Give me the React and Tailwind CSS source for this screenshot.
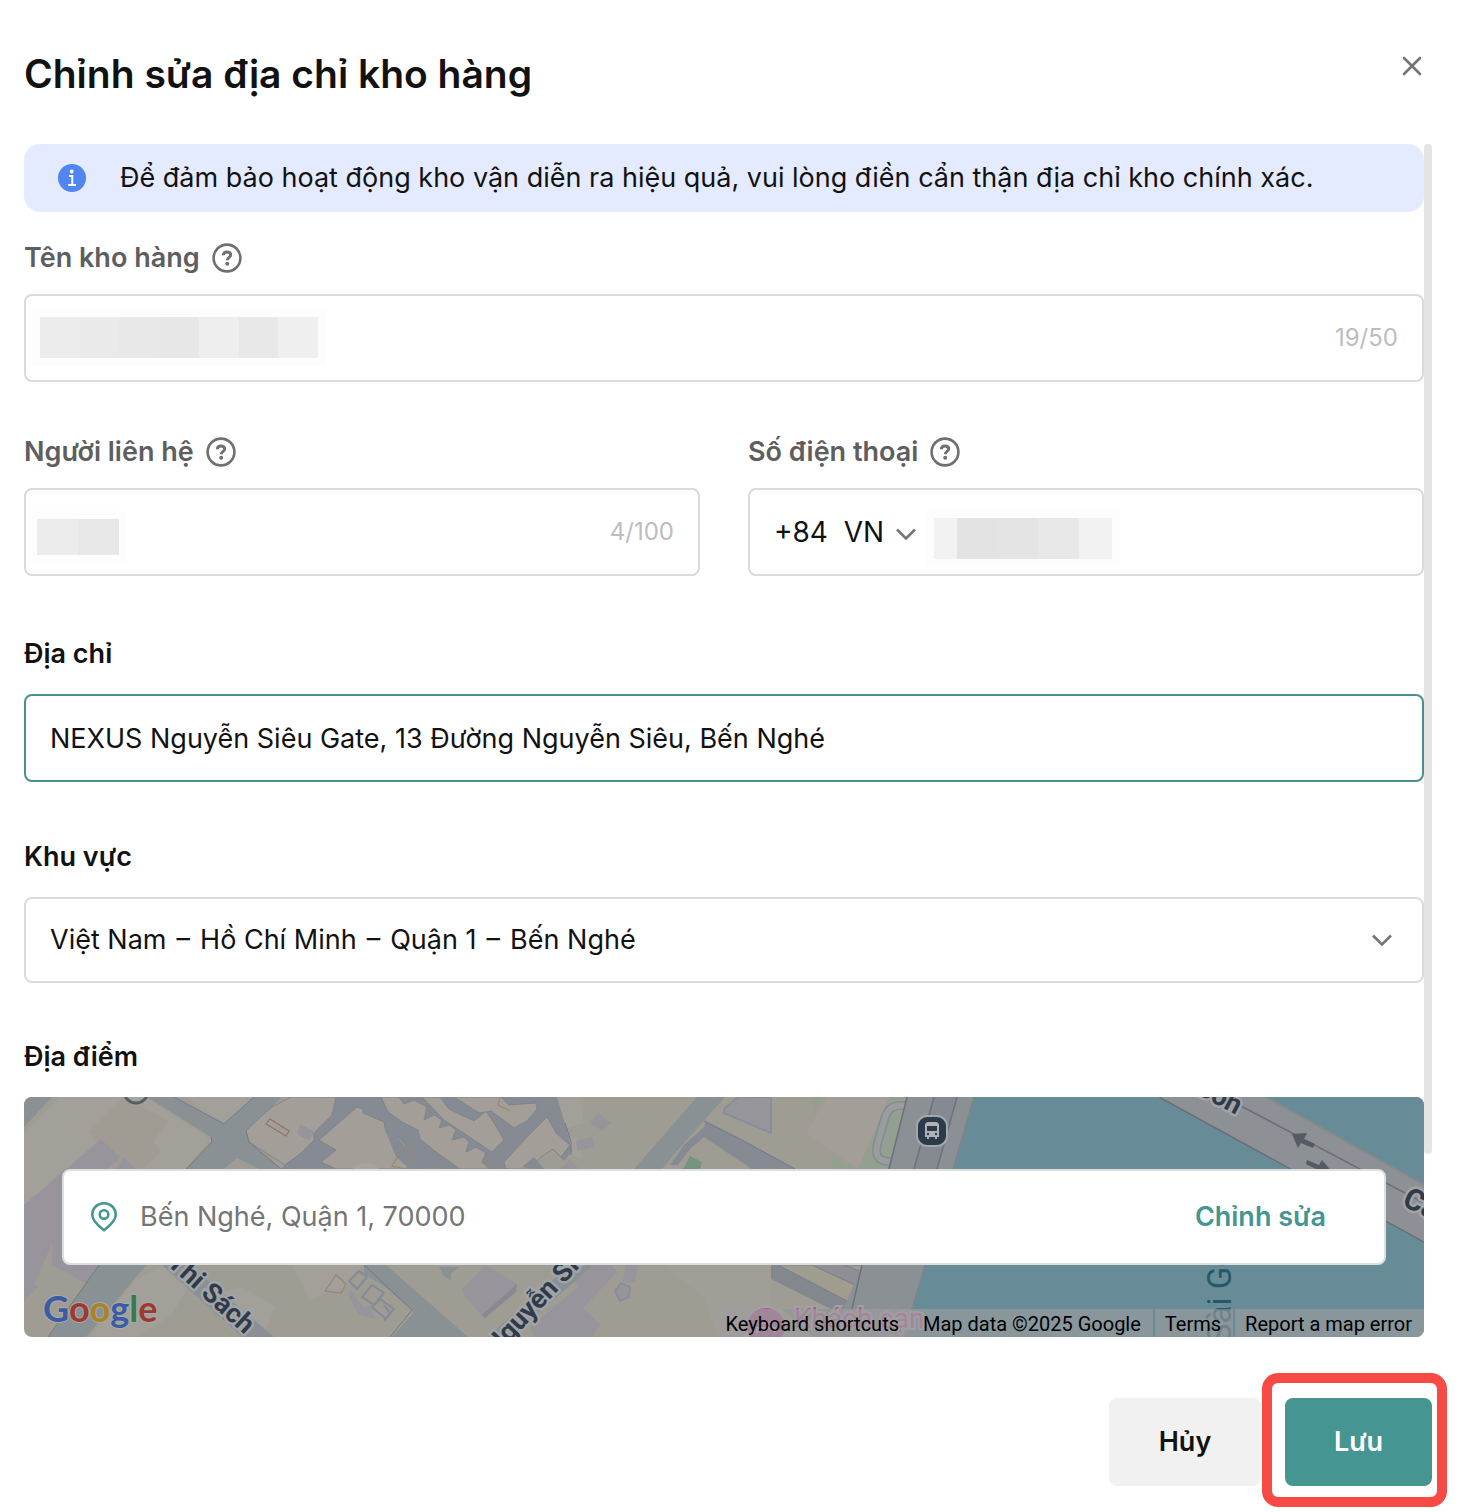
import { useState } from 'react';

const NAME_BLOCKS = ['bg-[#ececec]', 'bg-[#eaeaea]', 'bg-[#e8e8e8]', 'bg-[#e7e7e7]', 'bg-[#eeeeee]', 'bg-[#e8e8e8]', 'bg-[#efefef]'];
const CONTACT_BLOCKS = ['bg-[#ececec]', 'bg-[#e8e8e8]'];
const PHONE_BLOCKS = ['bg-[#e3e3e3]', 'bg-[#e4e4e4]', 'bg-[#e8e8e8]'];

/** Row of grey blocks that hides a private value. */
const Mosaic = ({ blocks, className }) => (
    <div className={`pointer-events-none absolute flex outline-8 outline-[#fdfdfd] ${className}`} aria-hidden="true">
        {blocks.map((color, i) => <span key={i} className={`flex-1 ${color}`} />)}
    </div>
);

const HelpIcon = () => (
    <svg className="size-[30px] text-[#707070]" viewBox="0 0 30 30" fill="none" stroke="currentColor" strokeWidth="2.6">
        <circle cx="15" cy="15" r="13.4" />
        <path d="M11.300 12.300c.1-2.200 1.600-3.300 3.700-3.300s3.700 1.200 3.700 3c0 2.400-3.400 2.500-3.400 5.200" strokeWidth="3" />
        <circle cx="15.200" cy="20.800" r="2" fill="currentColor" stroke="none" />
    </svg>
);

const Chevron = ({ className }) => (
    <svg className={`pointer-events-none absolute h-3 w-5 text-[#757575] ${className}`} viewBox="0 0 20 12" fill="none" stroke="currentColor" strokeWidth="2.6">
        <path d="M1 1.500l9 9 9-9" />
    </svg>
);

const FieldLabel = ({ htmlFor, children }) => (
    <div className="mb-4 flex h-10 items-center gap-3">
        <label htmlFor={htmlFor} className="font-semibold text-[#5e5e5e]">{children}</label>
        <HelpIcon />
    </div>
);

/** Map of the river bank, already dimmed behind the address card. */
const MapDrawing = () => (
    <svg className="absolute inset-0 h-full w-full" viewBox="0 0 1400 240" preserveAspectRatio="xMidYMid slice" aria-hidden="true">
        <rect width="1400" height="240" fill="#9f9c94" />

        {/* city blocks */}
        <g fill="#a3a09a">
            <path d="M60 0h62l64 42-24 30H40L0 110V36L36 0z" />
            <path d="M160 0h70l-30 25z" />
            <path d="M530 0h26l4 26-20 6z M545 38l14 8-2 16-16-6z" />
            <path d="M803 0h62l-30 72-53-36z" fill="#a39f98" />
            <path d="M640 168h120v72h-66l-14-40z" fill="#a19e98" />
            <path d="M110 184l30-16 28 14-20 36-34 22H66z M178 200l40-10 34 20-12 26h-30z M268 168h70l-12 20-40 14z" />
        </g>
        <path d="M100 0l44 24-14 20 6 12-18 16H88L66 34z" fill="#9e9a92" opacity=".7" />

        {/* purple buildings */}
        <g fill="#97959b">
            <path d="M77 42l19 18-12 12h8l8-12 12 12v96H82l-14 22-14-8-26-14v-22L14 180l-14 24V108L54 62z" />
            <path d="M0 156l16 12-6 10-10-8z M0 178l14 12-14 14z" />
            <path d="M566 26l8-10 13 10-9 8z M552 44l17-4 2 10-18 4z M496 62l10 10h-16z M545 62l10 10h-18z" />
            <path d="M438 192l24-24 31 19-1 8-32 26-19-21z" />
            <path d="M540 168h48l5 7-34 36 17 16-8 13h-58l-4-10 48-40z" />
            <path d="M602 168h12l-3 18-12-1z" />
            <path d="M326 192l14 20 5-4 6 14-16-4-10-18z" />
        </g>
        <path d="M458 218l3 3 31-26 1-8z" fill="#8a8890" />

        {/* streets */}
        <g fill="#8a9195">
            <path d="M0 0h28L0 30z" />
            <path d="M123 0h27l50 27 30-27h27l-9 10-26 24 3 11 32 27h-22l-22-11-13 11h-38l26-27-1-5z" />
            <path d="M75 168h47l-60 72H24z" />
            <path d="M138 168h28l84 72h-32z" />
            <path d="M340 168h22l82 72h-76l22-25-30-26-20-12z" />
            <path d="M673 0h28l-49 55-14 17h-28z" />
            <path d="M512 196l36-28h22l-84 72h-22z" />
            <path d="M415 170h20l-8 6v8l-8-6z" />
        </g>

        {/* narrow lanes, with the blocks between them laid on top */}
        <path d="M257 72l51-56 4-16h221l12 40 3 14-8 10-12-12-10 2-12 18z" fill="#858a93" />
        <g fill="#a39f98" stroke="#7b8088" strokeWidth=".8">
            <path d="M233 23l15-13 19-10h45l-4 18-18 18v7l-13 13-16 12-36-23-3-11z" />
            <path d="M333 10l6 2v4l21 9 2 10 14 6 6 8 8 23h-78l-15-7 15-12-17-10z" />
            <path d="M357 0h18l5 7 10-4 13 7-3 13 10-5 8 5-3 8 10-3 7 5-4 10 12-3 5 5-3 10 10-5 10 6-4 9 8 7h-30l-20-14-20-16-2-9-16-8-14-10z" />
            <path d="M398 0h18l9 12 25 12 12-10 8 12 10 17-12 12-48-32z" />
            <path d="M430 0h47l8 8 27-2 1 6-10 12-13 7-23-17-12 2z" />
            <path d="M523 20l6 10 3 6 14 12-9 12-8-8-12 8-10 12h-25l-2-7 23-25z" />
        </g>
        <path d="M276 27l15 8-6 9-12-7z" fill="#97959b" />
        <path d="M360 30l14 10 10 14 14 10 8 8h-20l-14-12z" fill="#858a93" />
        <g fill="#858a93">
            <path d="M682 24l38 20 52 28h-44l-48-32-14 12-12 16h-8l14-20 20-18z" />
            <path d="M510 60l10 12h-14l-8-2z" />
        </g>
        <g fill="none" stroke="#747b85" strokeWidth="1">
            <path d="M150 0l50 27 30-27 M222 34l3 11 32 27 M162 72l26-27-1-5 M541 26l6 18v14" />
            <path d="M680 24l40 20 51 28 M340 168l48 45-22 27 M24 240l51-72" />
        </g>

        {/* outlined lots */}
        <g fill="none" stroke="#8d7468" strokeWidth="1.200">
            <path d="M242 27l4-5 19 12-3 5z" />
            <path d="M368 69l12-19 12 6-10 16z M476 0l-2 8 12 6 M462 72l4-8 8 4-2 4" stroke="#938b74" />
            <path d="M301 194l11-16 10 9-5 9z" stroke="#938770" />
            <path d="M325 184l10-10 8 6-10 12z M338 200l10-12 12 8-10 12z M348 210l8-8 14 10-8 10z M360 208l6 8-6 8" stroke="#858a98" strokeWidth="2" />
            <path d="M597 186l9 4-1 10-9 4-5-10z M700 12l14-12h33v36L700 16z" stroke="#898d99" strokeWidth="2" fill="#96969a" />
        </g>

        {/* parks */}
        <path d="M666 59l12 6-2 7h-17z" fill="#76957e" />
        <path d="M788 0h10l-6 14z M806 60l28 12 31-72h18l-18 72h-55z" fill="#93a090" />
        <path d="M885 9c-16-2-21 2-24 12l-7 24c-4 14 0 19 13 20" fill="none" stroke="#848b94" strokeWidth="9" />
        <path d="M885 9c-16-2-21 2-24 12l-7 24c-4 14 0 19 13 20" fill="none" stroke="#9a9d9d" strokeWidth="6" />

        {/* stepped blocks beside the quay */}
        <path d="M747 168h95l-14 72h-40l-41-38z" fill="#8d8f94" />
        <path d="M747 168h8l74 38-4 12 12 22h-22l-68-45z" fill="#83888f" />
        <path d="M754 168h34l43 20-4 18z M820 168h18l-2 6z" fill="#a09c90" stroke="#7a7f87" strokeWidth="1" />
        <path d="M747 182l60 30h-60z" fill="#9f9c94" />

        {/* river and quay road */}
        <path d="M950 0h450v240H880z" fill="#688c97" />
        <path d="M883 0h67l-70 240h-72l30-72z" fill="#8b9094" />
        <path d="M910 0h23l-20 72h-23z" fill="#858992" />
        <path d="M910 0l-20 72 M933 0l-20 72 M883 0l-18 72 M838 168l-10 44" fill="none" stroke="#6d717d" strokeWidth="1.500" />
        <path d="M950 0l-70 240" stroke="#7c8588" strokeWidth="1.500" />

        {/* bridge */}
        <path d="M1135 0h107l158 88v57z" fill="#8d9094" />
        <path d="M1242 0l158 88" stroke="#858a8a" strokeWidth="2" />
        <path d="M1135 0l265 145 M1217 9l183 97" stroke="#6b6d77" strokeWidth="1.500" />
        <g fill="#555a64">
            <path d="M1268 37l15-1-3 6 11 5-2 4-12-5-3 5z" />
            <path d="M1283 63l12 5 3-5 12 14-16 3 2-6-14-7z" />
        </g>

        {/* place markers */}
        <circle cx="112" cy="-6" r="12" fill="#a5a5a3" stroke="#575e65" strokeWidth="3" />
        <circle cx="342" cy="84" r="18" fill="#a6a49f" />
        <rect x="893" y="19" width="30" height="30" rx="10" fill="#2d3a4a" stroke="#a3a8ab" strokeWidth="2" />
        <path d="M901 28q0-3 4-3h6q4 0 4 3v12h-2v2h-2v-2h-6v2h-2v-2h-2z" fill="#aeb3b8" />
        <path d="M903 29h10v5h-10z" fill="#2d3a4a" />
        <circle cx="904" cy="37" r="1.200" fill="#2d3a4a" />
        <circle cx="912" cy="37" r="1.200" fill="#2d3a4a" />
        <circle cx="742" cy="230" r="20" fill="#a2608f" stroke="#a5a19f" strokeWidth="2" />
        <path d="M733 236v-5h18v5 M736 231v-5h12v5" fill="none" stroke="#b9a1b3" strokeWidth="2" />

        {/* names on the map */}
        <g fontFamily="Roboto, sans-serif" fontWeight="700" fontSize="27" fill="#303a48" stroke="#a0a4a7" strokeWidth="5" paintOrder="stroke" strokeLinejoin="round">
            <text transform="translate(142 167) rotate(42)">Thi Sách</text>
            <text transform="translate(472 260) rotate(-47)">Nguyễn Siêu</text>
            <text transform="translate(1169 -5) rotate(28)">Gòn</text>
            <text transform="translate(1377 108) rotate(26)" fontSize="30">Cầu</text>
        </g>
        <text transform="translate(1207 246) rotate(-90)" fontFamily="Roboto, sans-serif" fontSize="33" fill="#245866">Sài Gòn</text>
        <text x="770" y="231" fontFamily="Roboto, sans-serif" fontSize="28" fill="#a2608f" stroke="#a39fa2" strokeWidth="4" paintOrder="stroke">Khách sạn</text>
        <text x="19" y="225" fontFamily="Lato, sans-serif" fontWeight="700" fontSize="36" stroke="#a8a9a9" strokeWidth="2" paintOrder="stroke">
            <tspan fill="#3b5ba5">G</tspan>
            <tspan fill="#9c3a31">o</tspan>
            <tspan fill="#a98425">o</tspan>
            <tspan fill="#3b5ba5">g</tspan>
            <tspan fill="#3a7a48">l</tspan>
            <tspan fill="#9c3a31">e</tspan>
        </text>
    </svg>
);

const App = () => {
    const [name,    setName]    = useState('');
    const [contact, setContact] = useState('');
    const [phone,   setPhone]   = useState('');
    const [address, setAddress] = useState('NEXUS Nguyễn Siêu Gate, 13 Đường Nguyễn Siêu, Bến Nghé');

    return (
        <div className="min-h-screen bg-white pr-8 pb-[26px] pl-6 font-['Inter',sans-serif] text-[27px] leading-10 text-[#121212]">
            <header className="flex h-36 items-start justify-between pt-12 pr-[10px]">
                <h1 className="text-[39px] leading-[52px] font-semibold">Chỉnh sửa địa chỉ kho hàng</h1>
                <button type="button" aria-label="Đóng" className="mt-2 text-[#757575]">
                    <svg className="size-5" viewBox="0 0 20 20" fill="none" stroke="currentColor" strokeWidth="2.600" strokeLinecap="round">
                        <path d="M2 2l16 16M18 2L2 18" />
                    </svg>
                </button>
            </header>

            <form className="relative pr-2" onSubmit={e => e.preventDefault()}>
                <div className="absolute top-0 right-0 h-[1010px] w-2 rounded-full bg-[#e4e4e4]" />

                <div className="flex min-h-[68px] items-center rounded-2xl bg-[#e5ebfe] pl-[34px]">
                    <svg className="mr-[34px] size-7 shrink-0" viewBox="0 0 28 28">
                        <circle cx="14" cy="14" r="14" fill="#4f86f0" />
                        <circle cx="13.700" cy="7.500" r="1.900" fill="#fff" />
                        <path d="M11 12h3.300v9M10.300 21h7.700" fill="none" stroke="#fff" strokeWidth="2" />
                    </svg>
                    <p>Để đảm bảo hoạt động kho vận diễn ra hiệu quả, vui lòng điền cẩn thận địa chỉ kho chính xác.</p>
                </div>

                <div className="mt-[26px]">
                    <FieldLabel htmlFor="name">Tên kho hàng</FieldLabel>
                    <div className="relative flex h-[88px] items-center rounded-lg border-2 border-[#dadada] px-6">
                        <input id="name" value={name} onChange={e => setName(e.target.value)} className="min-w-0 flex-1 outline-none" />
                        <span className="text-2xl text-[#bdbdbd]">19/50</span>
                        <Mosaic blocks={NAME_BLOCKS} className="top-[21px] left-[14px] h-[41px] w-[278px]" />
                    </div>
                </div>

                <div className="mt-[50px] grid grid-cols-2 gap-12">
                    <div>
                        <FieldLabel htmlFor="contact">Người liên hệ</FieldLabel>
                        <div className="relative flex h-[88px] items-center rounded-lg border-2 border-[#dadada] px-6">
                            <input id="contact" value={contact} onChange={e => setContact(e.target.value)} className="min-w-0 flex-1 outline-none" />
                            <span className="text-2xl text-[#bdbdbd]">4/100</span>
                            <Mosaic blocks={CONTACT_BLOCKS} className="top-[29px] left-[11px] h-9 w-[82px]" />
                        </div>
                    </div>
                    <div>
                        <FieldLabel htmlFor="phone">Số điện thoại</FieldLabel>
                        <div className="relative flex h-[88px] items-center rounded-lg border-2 border-[#dadada] px-6">
                            <div className="relative">
                                <select aria-label="Mã quốc gia" className="w-[142px] appearance-none text-[28px] outline-none">
                                    <option>+84&nbsp; VN</option>
                                </select>
                                <Chevron className="top-4 right-0" />
                            </div>
                            <input id="phone" type="tel" value={phone} onChange={e => setPhone(e.target.value)} className="ml-4 min-w-0 flex-1 outline-none" />
                            <Mosaic blocks={PHONE_BLOCKS} className="top-[28px] left-[184px] h-[41px] w-[178px] bg-[#f2f2f2] pr-[33px] pl-[23px]" />
                        </div>
                    </div>
                </div>

                <div className="mt-[58px]">
                    <label htmlFor="address" className="mb-5 block font-semibold">Địa chỉ</label>
                    <input
                        id="address"
                        value={address}
                        onChange={e => setAddress(e.target.value)}
                        className="block h-[88px] w-full rounded-lg border-2 border-[#4a918e] px-6 outline-none"
                    />
                </div>

                <div className="mt-[55px]">
                    <label htmlFor="region" className="mb-5 block font-semibold">Khu vực</label>
                    <div className="relative">
                        <select id="region" className="block h-[86px] w-full appearance-none rounded-lg border-2 border-[#dadada] px-6 outline-none">
                            <option>Việt Nam &#8202;–&#8202; Hồ Chí Minh &#8202;–&#8202; Quận 1 &#8202;–&#8202; Bến Nghé</option>
                        </select>
                        <Chevron className="top-[37px] right-8" />
                    </div>
                </div>

                <section className="mt-[54px]">
                    <h2 className="mb-5 font-semibold">Địa điểm</h2>
                    <div className="relative overflow-hidden rounded-lg px-[38px] py-[72px]">
                        <MapDrawing />
                        <div className="relative flex h-24 items-center rounded-lg border-2 border-[#dcdfe0] bg-white pr-[58px] pl-[27px]">
                            <svg className="mr-[23px] h-[30px] w-[26px] shrink-0 text-[#459592]" viewBox="0 0 26 30" fill="none" stroke="currentColor" strokeWidth="2.600">
                                <path d="M13 28.300C9 25 1.300 19.500 1.300 12.700 1.300 6 6.500 1.300 13 1.300S24.700 6 24.700 12.700C24.700 19.500 17 25 13 28.300z" strokeLinejoin="round" />
                                <circle cx="13" cy="12.500" r="4.300" />
                            </svg>
                            <span className="flex-1 text-[#757575]">Bến Nghé, Quận 1, 70000</span>
                            <button type="button" className="font-semibold text-[#459592]">Chỉnh sửa</button>
                        </div>
                        <div className="absolute right-0 bottom-0 flex h-7 gap-[2px] font-['Roboto',sans-serif] text-xl leading-[30px] text-black">
                            <div className="flex gap-6 bg-[#a09ea0]/60 pr-3 pl-[10px]">
                                <button type="button">Keyboard shortcuts</button>
                                <span>Map data ©2025 Google</span>
                            </div>
                            <a href="#terms" className="bg-[#a09ea0]/60 pr-3 pl-[10px]">Terms</a>
                            <a href="#report" className="bg-[#a09ea0]/60 pr-3 pl-[10px]">Report a map error</a>
                        </div>
                    </div>
                </section>
            </form>

            <footer className="mt-[61px] flex justify-end gap-6">
                <button type="button" className="h-[88px] w-[152px] rounded-lg bg-[#f1f1f1] font-semibold">Hủy</button>
                <div className="relative">
                    <button type="button" className="h-[88px] w-[147px] rounded-lg bg-[#459592] font-semibold text-white">Lưu</button>
                    <div className="pointer-events-none absolute -top-[25px] -right-[15px] -bottom-[21px] -left-[23px] rounded-[16px] border-[10px] border-[#f84a45]" />
                </div>
            </footer>
        </div>
    );
};

export default App;
